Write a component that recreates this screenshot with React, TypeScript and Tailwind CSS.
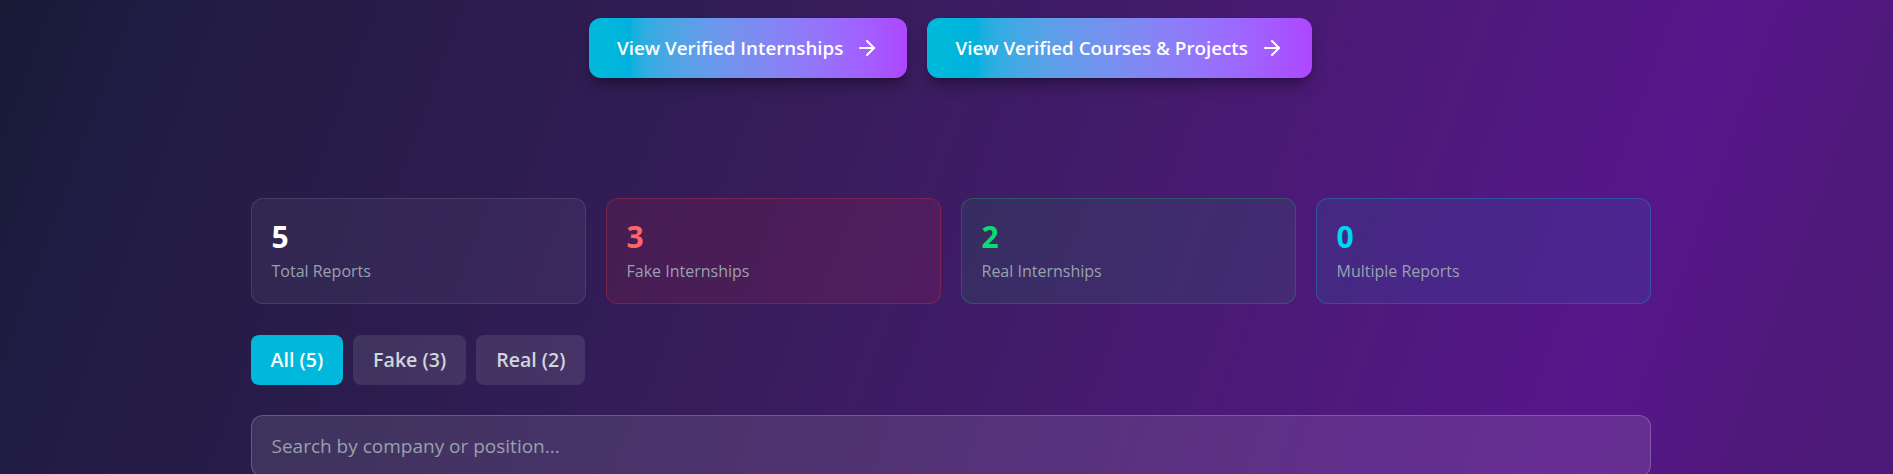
import React from 'react';
import { ArrowRight } from 'lucide-react';

const stats = [
  { value: 5, label: 'Total Reports', box: 'bg-white/5 border-white/10', num: 'text-white' },
  { value: 3, label: 'Fake Internships', box: 'bg-red-500/10 border-red-500/30', num: 'text-red-400' },
  { value: 2, label: 'Real Internships', box: 'bg-green-500/10 border-green-500/30', num: 'text-green-400' },
  { value: 0, label: 'Multiple Reports', box: 'bg-cyan-500/10 border-cyan-500/30', num: 'text-cyan-400' },
];

const tabs = [
  { label: 'All (5)', active: true },
  { label: 'Fake (3)', active: false },
  { label: 'Real (2)', active: false },
];

export default function App() {
  return (
    <div
      className="min-h-screen pl-2 pt-[18px] bg-[linear-gradient(110deg,#161a35_0%,#211c44_8%,#281c4a_20%,#3c1c62_48%,#4a1a75_65%,#57168a_84%,#50187c_92%,#4b1a76_100%)]"
      style={{ fontFamily: '"Open Sans", "Noto Sans", sans-serif' }}
    >
      {/* Top links */}
      <div className="flex justify-center gap-5">
        <button className="flex items-center gap-3 px-7 py-4 rounded-xl bg-linear-to-r from-cyan-500 from-5% to-purple-500 text-white text-[18.8px] leading-7 font-semibold shadow-lg shadow-black/30">
          View Verified Internships
          <ArrowRight size={24} strokeWidth={2} />
        </button>
        <button className="flex items-center gap-3 px-7 py-4 rounded-xl bg-linear-to-r from-cyan-500 from-5% to-purple-500 text-white text-[18.8px] leading-7 font-semibold shadow-lg shadow-black/30">
          View Verified Courses &amp; Projects
          <ArrowRight size={24} strokeWidth={2} />
        </button>
      </div>

      <div className="w-[1400px] mx-auto mt-[120px]">
        {/* Stats */}
        <div className="grid grid-cols-4 gap-5">
          {stats.map((s) => (
            <div key={s.label} className={`rounded-xl border p-5 ${s.box}`}>
              <div className={`text-3xl font-bold ${s.num}`}>{s.value}</div>
              <div className="mt-1 text-base text-gray-400">{s.label}</div>
            </div>
          ))}
        </div>

        {/* Filter tabs */}
        <div className="flex gap-2.5 mt-[31px]">
          {tabs.map((t) => (
            <button
              key={t.label}
              className={
                t.active
                  ? 'px-5 py-[11px] rounded-lg bg-cyan-500 text-white text-[19.6px] leading-7 font-semibold'
                  : 'px-5 py-[11px] rounded-lg bg-white/10 text-gray-300 text-[19.6px] leading-7 font-semibold'
              }
            >
              {t.label}
            </button>
          ))}
        </div>

        {/* Search */}
        <input
          type="text"
          placeholder="Search by company or position..."
          className="mt-[30px] w-full px-5 py-4 rounded-xl bg-white/10 border border-white/20 text-[19px] leading-7 text-white placeholder:text-gray-400 outline-none"
        />
      </div>
    </div>
  );
}
